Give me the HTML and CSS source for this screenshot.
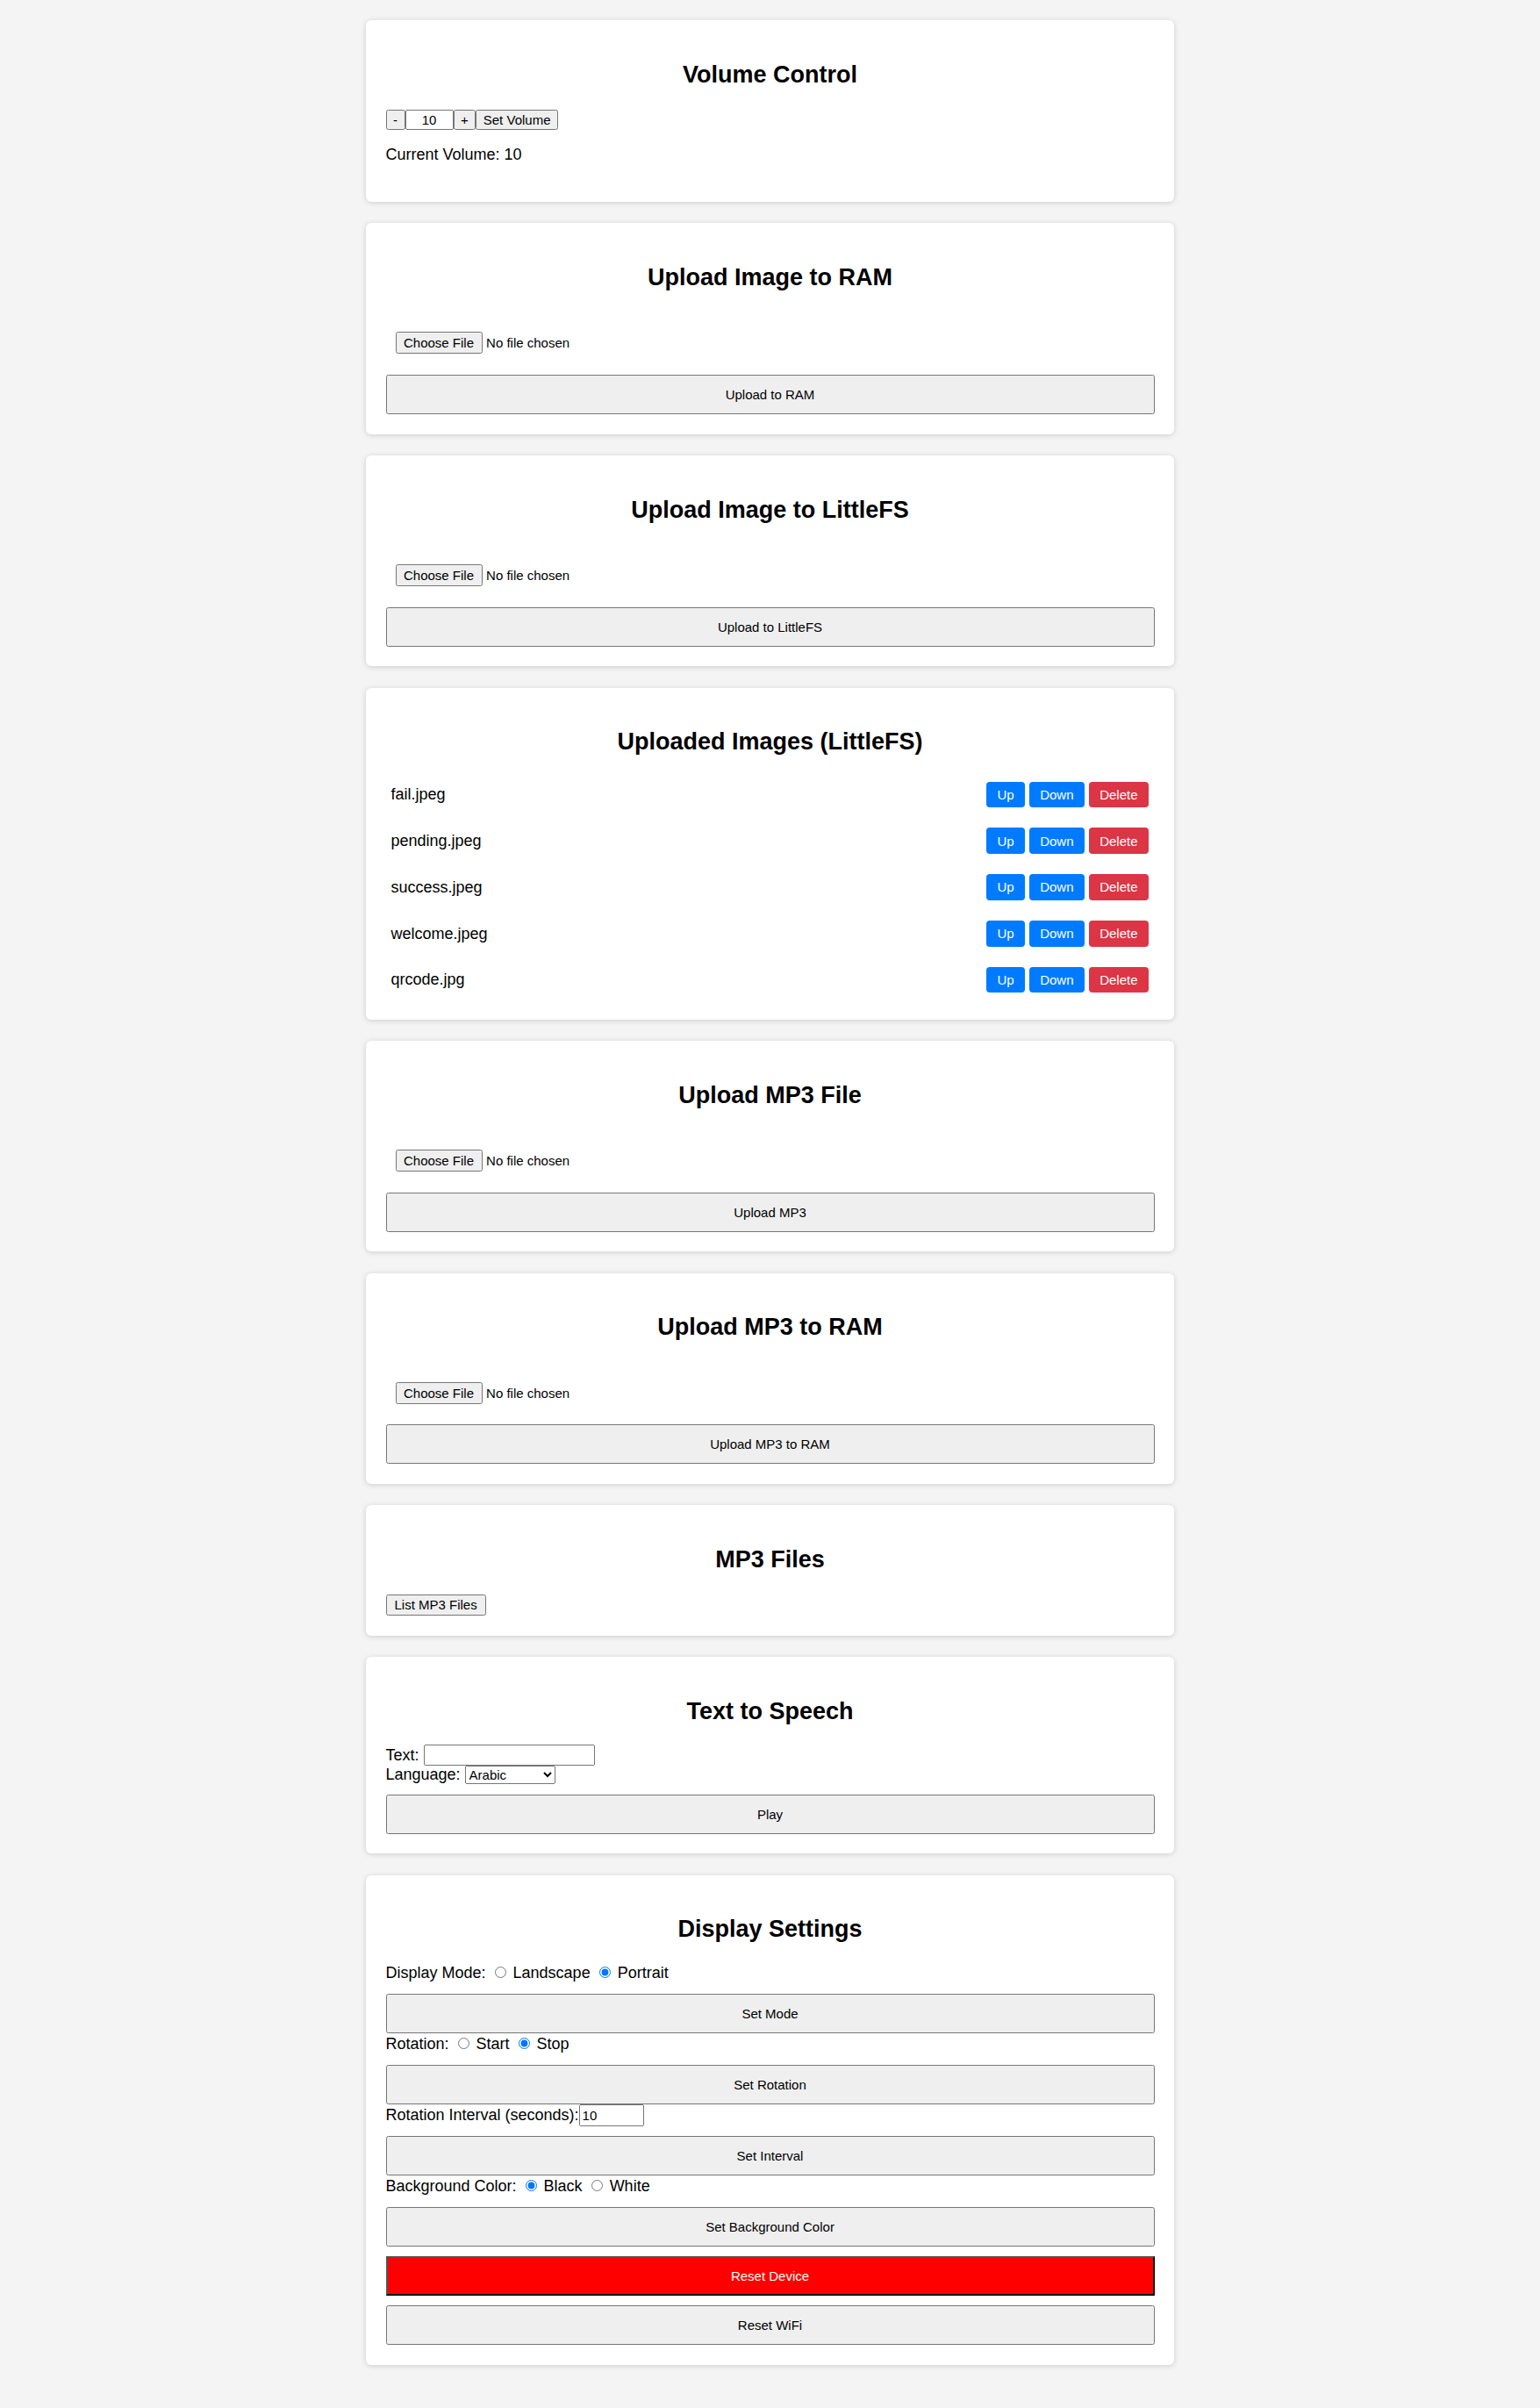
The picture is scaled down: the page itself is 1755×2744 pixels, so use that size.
FILE: index.html
```html
<!DOCTYPE html>
<html lang="en">
<head>
<meta charset="utf-8">
<title>Device Control Panel</title>
<link rel="stylesheet" href="styles.css">
</head>
<body>
<div class="card">
  <h2>Volume Control</h2>
  <div class="volume-row"><button class="ctl">-</button><input class="vol-input" type="number" value="10"><button class="ctl">+</button><button class="ctl">Set Volume</button></div>
  <p class="current">Current Volume: 10</p>
</div>

<div class="card">
  <h2>Upload Image to RAM</h2>
  <div class="file-row"><input type="file" class="file-input"></div>
  <button class="wide">Upload to RAM</button>
</div>

<div class="card">
  <h2>Upload Image to LittleFS</h2>
  <div class="file-row"><input type="file" class="file-input"></div>
  <button class="wide">Upload to LittleFS</button>
</div>

<div class="card">
  <h2>Uploaded Images (LittleFS)</h2>
  <div class="file-list">
    <div class="file-item"><span class="fname">fail.jpeg</span><div class="actions"><button class="act">Up</button><button class="act">Down</button><button class="act del">Delete</button></div></div>
    <div class="file-item"><span class="fname">pending.jpeg</span><div class="actions"><button class="act">Up</button><button class="act">Down</button><button class="act del">Delete</button></div></div>
    <div class="file-item"><span class="fname">success.jpeg</span><div class="actions"><button class="act">Up</button><button class="act">Down</button><button class="act del">Delete</button></div></div>
    <div class="file-item"><span class="fname">welcome.jpeg</span><div class="actions"><button class="act">Up</button><button class="act">Down</button><button class="act del">Delete</button></div></div>
    <div class="file-item"><span class="fname">qrcode.jpg</span><div class="actions"><button class="act">Up</button><button class="act">Down</button><button class="act del">Delete</button></div></div>
  </div>
</div>

<div class="card">
  <h2>Upload MP3 File</h2>
  <div class="file-row"><input type="file" class="file-input"></div>
  <button class="wide">Upload MP3</button>
</div>

<div class="card">
  <h2>Upload MP3 to RAM</h2>
  <div class="file-row"><input type="file" class="file-input"></div>
  <button class="wide">Upload MP3 to RAM</button>
</div>

<div class="card">
  <h2>MP3 Files</h2>
  <div class="list-row"><button class="ctl list-btn">List MP3 Files</button></div>
</div>

<div class="card">
  <h2>Text to Speech</h2>
  <div class="field-line">Text: <input type="text" class="tts-input"></div>
  <div class="field-line">Language: <select class="lang-select"><option>Arabic</option><option>English</option><option>French</option></select></div>
  <button class="wide play">Play</button>
</div>

<div class="card">
  <h2>Display Settings</h2>
  <div class="radio-line">Display Mode: <input type="radio" name="mode"> Landscape <input type="radio" name="mode" checked> Portrait</div>
  <button class="wide">Set Mode</button>
  <div class="radio-line">Rotation: <input type="radio" name="rot"> Start <input type="radio" name="rot" checked> Stop</div>
  <button class="wide">Set Rotation</button>
  <div class="radio-line">Rotation Interval (seconds):<input type="number" class="interval-input" value="10"></div>
  <button class="wide">Set Interval</button>
  <div class="radio-line">Background Color: <input type="radio" name="bg" checked> Black <input type="radio" name="bg"> White</div>
  <button class="wide">Set Background Color</button>
  <button class="wide danger">Reset Device</button>
  <button class="wide">Reset WiFi</button>
</div>
</body>
</html>
```

FILE: styles.css
```css
* {
  box-sizing: border-box;
}

body {
  margin: 0;
  padding: 23px 0 40px;
  background: #f4f4f4;
  font-family: "Liberation Sans", Arial, sans-serif;
  font-size: 18px;
  color: #000;
}

.card {
  display: flex;
  flex-direction: column;
  width: 921px;
  margin: 0 auto 24.5px;
  padding: 22.5px;
  background: #fff;
  border-radius: 6px;
  box-shadow: 0 1px 6px rgba(0, 0, 0, 0.16);
}

h2 {
  margin: 24px 0 22px;
  font-size: 27px;
  line-height: 31px;
  font-weight: bold;
  text-align: center;
}

button,
input,
select {
  font-family: "Liberation Sans", Arial, sans-serif;
  font-size: 15px;
}

/* Volume */
.volume-row {
  display: flex;
  align-items: stretch;
  height: 23px;
  margin-top: 2.5px;
}

.ctl {
  padding: 1px 6.5px;
  height: 23px;
}

.vol-input {
  width: 55px;
  height: 23px;
  padding: 1px 2px;
  text-align: center;
}

.vol-input::-webkit-inner-spin-button,
.vol-input::-webkit-outer-spin-button,
.interval-input::-webkit-inner-spin-button,
.interval-input::-webkit-outer-spin-button {
  -webkit-appearance: none;
  margin: 0;
}

.current {
  margin: 18.4px 0 20.4px;
  line-height: 20.7px;
}

/* File upload */
.file-row {
  height: 25px;
  margin: 24.5px 0 12.7px 11px;
}

.file-input {
  height: 25px;
  font-size: 15px;
}

.file-input::file-selector-button {
  font-family: "Liberation Sans", Arial, sans-serif;
  font-size: 15px;
  height: 25px;
  padding: 1px 7.5px;
  margin-right: 4.5px;
}

.wide {
  display: block;
  width: 100%;
  height: 45px;
  margin-top: 11px;
  padding: 0 10px;
}

.danger {
  background: #ff0000;
  color: #fff;
}

/* Image list */
.file-list {
  display: flex;
  flex-direction: column;
  gap: 11.6px;
  margin: 1.2px 0 1.6px;
}

.file-item {
  display: flex;
  justify-content: space-between;
  align-items: center;
  padding: 6px 7px 6px 6px;
}

.fname {
  line-height: 20.7px;
}

.actions {
  display: flex;
  gap: 5.6px;
}

.act {
  height: 29.3px;
  padding: 0 12px;
  border: none;
  border-radius: 4px;
  background: #007bff;
  color: #fff;
}

.act.del {
  background: #dc3545;
}

/* MP3 list */
.list-row {
  margin-top: 1.9px;
  height: 24.3px;
}

.list-btn {
  height: 24.3px;
  padding: 1px 8px;
}

/* Text to speech */
.field-line {
  line-height: 20.7px;
}

.tts-input {
  width: 195px;
  height: 24px;
  padding: 1px 2px;
  vertical-align: baseline;
}

.lang-select {
  width: 103px;
  height: 21px;
}

.play {
  margin-top: 12px;
}

/* Display settings */
.radio-line {
  line-height: 25px;
  height: 25px;
}

.radio-line input[type="radio"] {
  width: 13px;
  height: 13px;
  margin: 3px 3px 0 5px;
}

.interval-input {
  width: 74px;
  height: 24.3px;
  padding: 1px 2px;
}
```
